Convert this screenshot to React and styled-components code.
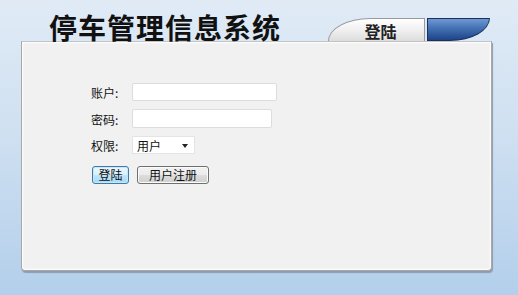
import React from "react";
import styled, { createGlobalStyle } from "styled-components";

const Global = createGlobalStyle`
  html, body { margin: 0; padding: 0; }
  body { font-family: "Noto Sans CJK SC", "Noto Sans", sans-serif; }
`;

const Page = styled.div`
  width: 518px;
  height: 295px;
  box-sizing: border-box;
  background: linear-gradient(to bottom, #e0ebf6 0%, #cfe0f1 45%, #b3cfeb 100%);
  padding-left: 21px;
  overflow: hidden;
`;

const Header = styled.div`
  display: flex;
  align-items: flex-end;
  height: 41px;
  width: 471px;
`;

const Title = styled.h1`
  margin: 0 0 0 28px;
  font-family: "Noto Sans CJK SC", sans-serif;
  font-weight: 700;
  font-size: 28px;
  line-height: 34px;
  letter-spacing: 1px;
  color: #111;
  position: relative;
  top: 3px;
`;

const Tabs = styled.div`
  display: flex;
  margin-left: auto;
  margin-right: 2px;
  gap: 2px;
`;

const Tab = styled.div`
  height: 23px;
  box-sizing: border-box;
  display: flex;
  align-items: center;
  justify-content: center;
  font-family: "Noto Sans CJK SC", serif;
  font-weight: 700;
  font-size: 16px;
  color: #222;
  ${(p) =>
    p.$active
      ? `
    width: 97px;
    padding-left: 8px;
    padding-top: 1px;
    background: linear-gradient(to bottom, #ffffff 0%, #f0f0f0 50%, #dcdcdc 100%);
    border: 1px solid #9a9a9a;
    border-bottom: none;
    border-top-left-radius: 44px 24px;
  `
      : `
    width: 63px;
    background: linear-gradient(to bottom, #6e98d2 0%, #3f6cb0 50%, #1d4488 100%);
    border: 1px solid #1a2f5a;
    border-bottom-right-radius: 40px 23px;
  `}
`;

const Panel = styled.div`
  width: 471px;
  height: 230px;
  box-sizing: border-box;
  background: #f1f1f1;
  border: 1px solid #a8a8a8;
  border-top-color: #c4c4c4;
  border-radius: 0 0 4px 4px;
  box-shadow: inset 0 0 0 1px #fbfbfb, inset 0 0 0 2px #f6f4f2, 1px 2px 1px #8d9cb0;
  padding: 41px 0 0 69px;
`;

const Form = styled.div`
  display: flex;
  flex-direction: column;
`;

const Row = styled.div`
  display: flex;
  align-items: center;
  height: ${(p) => p.$h}px;
  margin-bottom: ${(p) => p.$mb}px;
`;

const Label = styled.label`
  width: 41px;
  font-size: 12px;
  color: #111;
  line-height: 16px;
  padding-top: 2px;
`;

const Input = styled.input`
  width: ${(p) => p.$w}px;
  height: 100%;
  box-sizing: border-box;
  border: 1px solid #dcdcdc;
  border-radius: 2px;
  background: #fff;
  margin: 0;
  padding: 0 3px;
  outline: none;
`;

const Select = styled.div`
  width: 63px;
  height: 100%;
  box-sizing: border-box;
  background: #fff;
  border: 1px solid #e4e4e4;
  display: flex;
  align-items: center;
  justify-content: space-between;
  padding: 0 6px 0 4px;
  font-size: 12px;
  color: #111;
`;

const Caret = styled.span`
  width: 0;
  height: 0;
  border-left: 3.5px solid transparent;
  border-right: 3.5px solid transparent;
  border-top: 4px solid #222;
  margin-top: 2px;
`;

const Buttons = styled.div`
  display: flex;
  gap: 8px;
  margin-left: 1px;
  height: 18px;
`;

const Button = styled.button`
  width: ${(p) => p.$w}px;
  height: 18px;
  box-sizing: border-box;
  margin: 0;
  padding: 0;
  font-family: "Noto Sans CJK SC", sans-serif;
  font-size: 12px;
  line-height: 14px;
  color: #111;
  border-radius: 3px;
  border: 1px solid ${(p) => (p.$focus ? "#3d7bad" : "#707070")};
  background: ${(p) =>
    p.$focus
      ? "linear-gradient(to bottom, #eaf6fd 0%, #d9f0fc 50%, #bee6fd 51%, #a7d9f5 100%)"
      : "linear-gradient(to bottom, #f2f2f2 0%, #ebebeb 50%, #dddddd 51%, #cfcfcf 100%)"};
  box-shadow: ${(p) => (p.$focus ? "inset 0 0 0 1px #c8e6f8" : "inset 0 0 0 1px #fafafa")};
`;

export default function App() {
  return (
    <Page>
      <Global />
      <Header>
        <Title>停车管理信息系统</Title>
        <Tabs>
          <Tab $active>登陆</Tab>
          <Tab />
        </Tabs>
      </Header>
      <Panel>
        <Form>
          <Row $h={18} $mb={8}>
            <Label>账户:</Label>
            <Input $w={145} />
          </Row>
          <Row $h={19} $mb={8}>
            <Label>密码:</Label>
            <Input $w={140} type="password" />
          </Row>
          <Row $h={18} $mb={12}>
            <Label>权限:</Label>
            <Select>
              用户
              <Caret />
            </Select>
          </Row>
          <Buttons>
            <Button $w={37} $focus>登陆</Button>
            <Button $w={72}>用户注册</Button>
          </Buttons>
        </Form>
      </Panel>
    </Page>
  );
}
